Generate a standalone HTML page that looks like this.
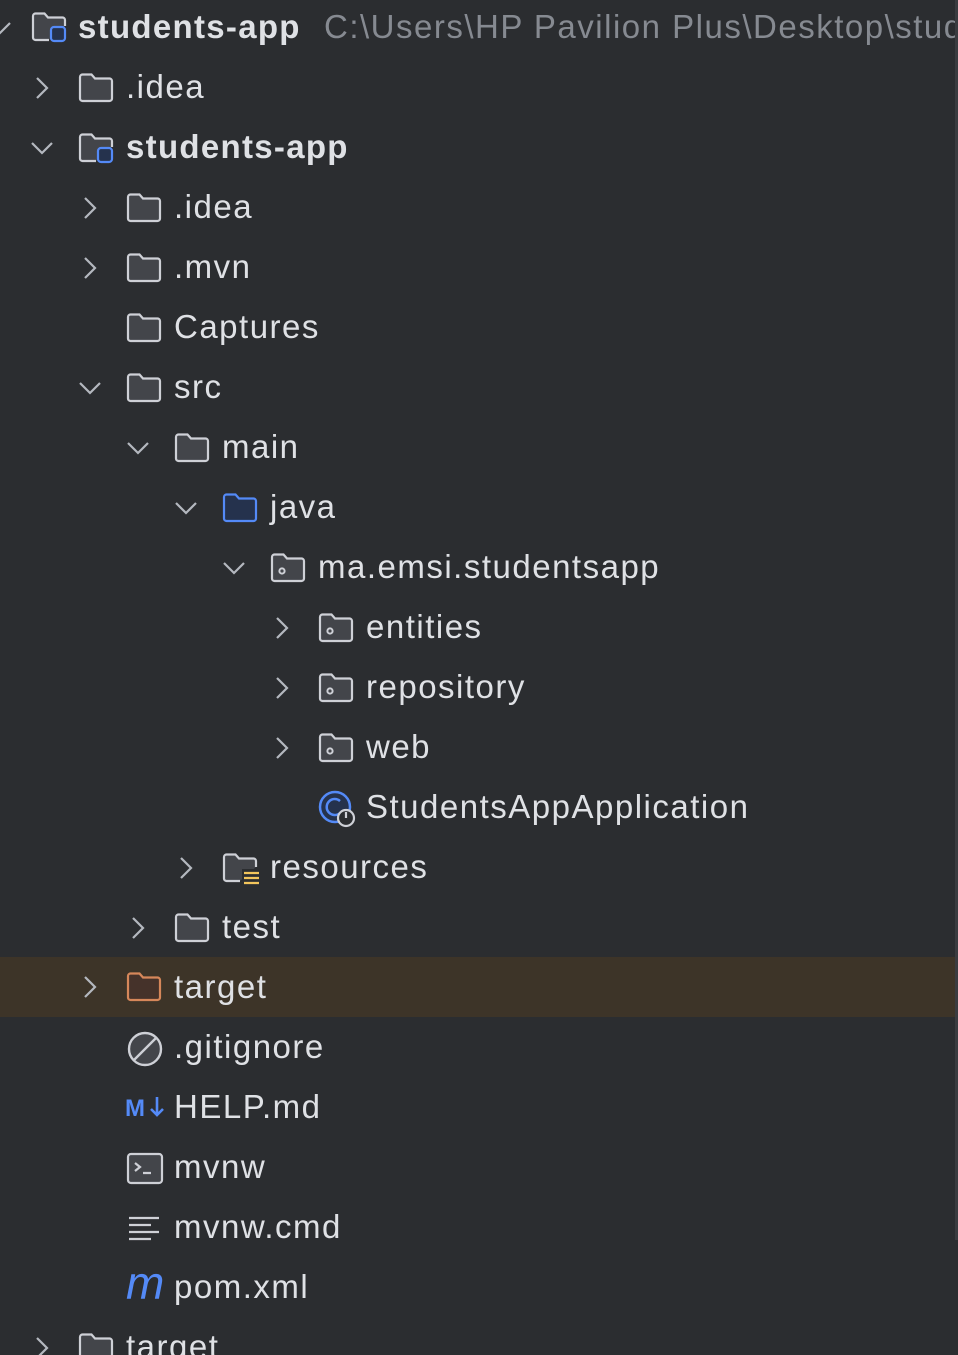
<!DOCTYPE html>
<html><head><meta charset="utf-8"><style>
html,body{margin:0;padding:0;background:#2b2d30;width:958px;height:1355px;overflow:hidden}
#w{position:relative;width:958px;height:1355px;overflow:hidden}
.r{position:absolute;left:0;width:955px;height:60px;line-height:60px;font-family:"Liberation Sans",sans-serif;font-size:33px;letter-spacing:1.5px;color:#dfe1e5;white-space:nowrap;overflow:hidden}
.r span{position:absolute;top:-3px}
.r svg{position:absolute}
.hl{background:#3d3428}
.sb{position:absolute;right:0;top:0;width:3px;height:1240px;background:#3a3c40}
</style></head><body><div id="w">
<div class="sb"></div>
<svg width="0" height="0" style="position:absolute">
<defs>
<symbol id="fold" viewBox="0 0 36 32"><path d="M2 5a2.5 2.5 0 0 1 2.5-2.5h9l3.5 4h14.5a2.5 2.5 0 0 1 2.5 2.5v17.5a2.5 2.5 0 0 1-2.5 2.5h-27a2.5 2.5 0 0 1-2.5-2.5z" fill="#43454a" stroke="#ced0d6" stroke-width="2.2"/></symbol>
<symbol id="pkg" viewBox="0 0 36 32"><path d="M2 5a2.5 2.5 0 0 1 2.5-2.5h9l3.5 4h14.5a2.5 2.5 0 0 1 2.5 2.5v17.5a2.5 2.5 0 0 1-2.5 2.5h-27a2.5 2.5 0 0 1-2.5-2.5z" fill="#43454a" stroke="#ced0d6" stroke-width="2.2"/><circle cx="12" cy="19" r="2.6" fill="none" stroke="#ced0d6" stroke-width="2"/></symbol>
<symbol id="mod" viewBox="0 0 36 32"><path d="M18 29h-13.5a2.5 2.5 0 0 1-2.5-2.5v-21.5a2.5 2.5 0 0 1 2.5-2.5h9l3.5 4h14.5a2.5 2.5 0 0 1 2.5 2.5v6" fill="#43454a" stroke="#ced0d6" stroke-width="2.2"/><rect x="20" y="16" width="14" height="14" rx="3" fill="#25324d" stroke="#548af7" stroke-width="2.2"/></symbol>
<symbol id="chr" viewBox="0 0 24 24"><path d="M7 2l10 10-10 10" fill="none" stroke="#b4b8bf" stroke-width="2.2"/></symbol>
<symbol id="chd" viewBox="0 0 24 24"><path d="M2 7l10 10 10-10" fill="none" stroke="#b4b8bf" stroke-width="2.2"/></symbol>
</defs></svg>

<div class="r" style="top:0"><svg style="left:-12px;top:16px" width="24" height="24"><use href="#chd"/></svg><svg style="left:31px;top:11px" width="36" height="32"><use href="#mod"/></svg><span style="left:78px;font-weight:bold;letter-spacing:1.3px">students-app</span><span style="left:324px;color:#868a91">C:\Users\HP Pavilion Plus\Desktop\students-app</span></div>
<div class="r" style="top:60px"><svg style="left:30px;top:16px" width="24" height="24"><use href="#chr"/></svg><svg style="left:78px;top:12px" width="36" height="32"><use href="#fold"/></svg><span style="left:126px">.idea</span></div>
<div class="r" style="top:120px"><svg style="left:30px;top:16px" width="24" height="24"><use href="#chd"/></svg><svg style="left:78px;top:12px" width="36" height="32"><use href="#mod"/></svg><span style="left:126px;font-weight:bold;letter-spacing:1.3px">students-app</span></div>
<div class="r" style="top:180px"><svg style="left:78px;top:16px" width="24" height="24"><use href="#chr"/></svg><svg style="left:126px;top:12px" width="36" height="32"><use href="#fold"/></svg><span style="left:174px">.idea</span></div>
<div class="r" style="top:240px"><svg style="left:78px;top:16px" width="24" height="24"><use href="#chr"/></svg><svg style="left:126px;top:12px" width="36" height="32"><use href="#fold"/></svg><span style="left:174px">.mvn</span></div>
<div class="r" style="top:300px"><svg style="left:126px;top:12px" width="36" height="32"><use href="#fold"/></svg><span style="left:174px">Captures</span></div>
<div class="r" style="top:360px"><svg style="left:78px;top:16px" width="24" height="24"><use href="#chd"/></svg><svg style="left:126px;top:12px" width="36" height="32"><use href="#fold"/></svg><span style="left:174px">src</span></div>
<div class="r" style="top:420px"><svg style="left:126px;top:16px" width="24" height="24"><use href="#chd"/></svg><svg style="left:174px;top:12px" width="36" height="32"><use href="#fold"/></svg><span style="left:222px">main</span></div>
<div class="r" style="top:480px"><svg style="left:174px;top:16px" width="24" height="24"><use href="#chd"/></svg><svg style="left:222px;top:12px" width="36" height="32" viewBox="0 0 36 32"><path d="M2 5a2.5 2.5 0 0 1 2.5-2.5h9l3.5 4h14.5a2.5 2.5 0 0 1 2.5 2.5v17.5a2.5 2.5 0 0 1-2.5 2.5h-27a2.5 2.5 0 0 1-2.5-2.5z" fill="#25324d" stroke="#548af7" stroke-width="2.2"/></svg><span style="left:270px">java</span></div>
<div class="r" style="top:540px"><svg style="left:222px;top:16px" width="24" height="24"><use href="#chd"/></svg><svg style="left:270px;top:12px" width="36" height="32"><use href="#pkg"/></svg><span style="left:318px">ma.emsi.studentsapp</span></div>
<div class="r" style="top:600px"><svg style="left:270px;top:16px" width="24" height="24"><use href="#chr"/></svg><svg style="left:318px;top:12px" width="36" height="32"><use href="#pkg"/></svg><span style="left:366px">entities</span></div>
<div class="r" style="top:660px"><svg style="left:270px;top:16px" width="24" height="24"><use href="#chr"/></svg><svg style="left:318px;top:12px" width="36" height="32"><use href="#pkg"/></svg><span style="left:366px">repository</span></div>
<div class="r" style="top:720px"><svg style="left:270px;top:16px" width="24" height="24"><use href="#chr"/></svg><svg style="left:318px;top:12px" width="36" height="32"><use href="#pkg"/></svg><span style="left:366px">web</span></div>
<div class="r" style="top:780px"><svg style="left:318px;top:10px" width="40" height="40" viewBox="0 0 40 40"><circle cx="17" cy="17" r="15" fill="#25324d" stroke="#548af7" stroke-width="2.5"/><path d="M22 11a8 8 0 1 0 0 12" fill="none" stroke="#548af7" stroke-width="2.5"/><circle cx="28" cy="28" r="8" fill="#2b2d30" stroke="#ced0d6" stroke-width="2.2"/><path d="M28 22v6" stroke="#ced0d6" stroke-width="2.2"/></svg><span style="left:366px">StudentsAppApplication</span></div>
<div class="r" style="top:840px"><svg style="left:174px;top:16px" width="24" height="24"><use href="#chr"/></svg><svg style="left:222px;top:12px" width="40" height="34" viewBox="0 0 40 34"><path d="M18 29h-13.5a2.5 2.5 0 0 1-2.5-2.5v-21.5a2.5 2.5 0 0 1 2.5-2.5h9l3.5 4h14.5a2.5 2.5 0 0 1 2.5 2.5v6" fill="#43454a" stroke="#ced0d6" stroke-width="2.2"/><rect x="20" y="17" width="18" height="16" fill="#2b2d30"/><path d="M22 21h15M22 26h15M22 31h15" stroke="#f2c55c" stroke-width="2.2"/></svg><span style="left:270px">resources</span></div>
<div class="r" style="top:900px"><svg style="left:126px;top:16px" width="24" height="24"><use href="#chr"/></svg><svg style="left:174px;top:12px" width="36" height="32"><use href="#fold"/></svg><span style="left:222px">test</span></div>
<div class="r hl" style="top:957px"><svg style="left:78px;top:18px" width="24" height="24"><use href="#chr"/></svg><svg style="left:126px;top:14px" width="36" height="32" viewBox="0 0 36 32"><path d="M2 5a2.5 2.5 0 0 1 2.5-2.5h9l3.5 4h14.5a2.5 2.5 0 0 1 2.5 2.5v17.5a2.5 2.5 0 0 1-2.5 2.5h-27a2.5 2.5 0 0 1-2.5-2.5z" fill="#45322a" stroke="#d6875a" stroke-width="2.2"/></svg><span style="left:174px;top:0px">target</span></div>
<div class="r" style="top:1020px"><svg style="left:126px;top:10px" width="38" height="38" viewBox="0 0 38 38"><circle cx="19" cy="19" r="16" fill="#43454a" stroke="#ced0d6" stroke-width="2.4"/><path d="M8 30L30 8" stroke="#ced0d6" stroke-width="2.4"/></svg><span style="left:174px">.gitignore</span></div>
<div class="r" style="top:1080px"><span style="left:125px;font-size:24px;font-weight:bold;color:#548af7;top:-1px;letter-spacing:0">M</span><svg style="left:149px;top:15px" width="16" height="24" viewBox="0 0 16 24"><path d="M8 2v18M2 14l6 6 6-6" fill="none" stroke="#548af7" stroke-width="2.6"/></svg><span style="left:174px">HELP.md</span></div>
<div class="r" style="top:1140px"><svg style="left:126px;top:12px" width="38" height="34" viewBox="0 0 38 34"><rect x="2" y="2" width="34" height="29" rx="3" fill="#43454a" stroke="#ced0d6" stroke-width="2.2"/><path d="M9 11l5 4-5 4M17 21h8" fill="none" stroke="#ced0d6" stroke-width="2.2"/></svg><span style="left:174px">mvnw</span></div>
<div class="r" style="top:1200px"><svg style="left:126px;top:14px" width="36" height="30" viewBox="0 0 36 30"><path d="M3 4h30M3 11h22M3 18h30M3 25h22" stroke="#ced0d6" stroke-width="2.2"/></svg><span style="left:174px">mvnw.cmd</span></div>
<div class="r" style="top:1260px"><span style="left:126px;font-size:46px;font-style:italic;color:#548af7;font-family:'Liberation Sans',sans-serif;top:-7px;letter-spacing:0">m</span><span style="left:174px">pom.xml</span></div>
<div class="r" style="top:1320px"><svg style="left:30px;top:16px" width="24" height="24"><use href="#chr"/></svg><svg style="left:78px;top:12px" width="36" height="32"><use href="#fold"/></svg><span style="left:126px">target</span></div>
</div></body></html>
